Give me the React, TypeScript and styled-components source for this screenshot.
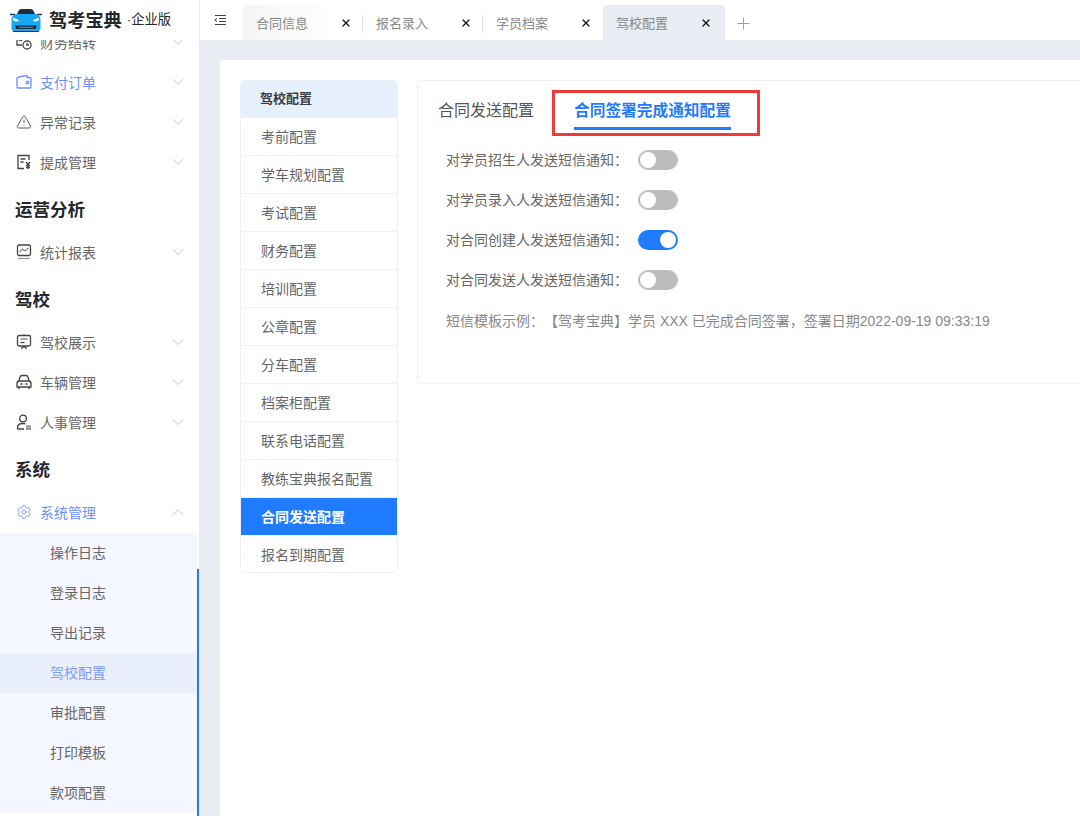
import React from 'react';
import styled, { createGlobalStyle } from 'styled-components';
import { ChevronDown, ChevronUp, Plus, Settings, TriangleAlert, X } from 'lucide-react';

const GlobalStyle = createGlobalStyle`
  html, body {
    margin: 0;
    padding: 0;
    height: 100%;
    overflow: hidden;
    background: #e9edf3;
    font-family: "Liberation Sans", "Noto Sans CJK SC", sans-serif;
  }
  * { box-sizing: border-box; }
`;

const Shell = styled.div`
  display: flex;
  width: 1080px;
  height: 816px;
  overflow: hidden;
`;

const Sidebar = styled.aside`
  position: relative;
  flex: 0 0 200px;
  height: 816px;
  background: #fff;
  border-right: 1px solid #e8ebf1;
  overflow: hidden;
`;

const LogoBar = styled.div`
  position: relative;
  z-index: 1;
  display: flex;
  align-items: center;
  height: 40px;
  padding-left: 10px;
  background: #fff;
`;

const LogoName = styled.span`
  margin: 0 0 3px 7px;
  font-size: 18.2px;
  font-weight: 700;
  color: #24272c;
  white-space: nowrap;
`;

const LogoEdition = styled.span`
  margin: 0 0 3px 5px;
  font-size: 13.3px;
  color: #24272c;
  white-space: nowrap;
`;

const MenuList = styled.div`
  margin-top: -17px;
`;

const MenuRow = styled.div<{ $active?: boolean }>`
  display: flex;
  align-items: center;
  height: 40px;
  padding: 0 11px 2px 16px;
  font-size: 14px;
  color: ${(p) => (p.$active ? '#6f8fff' : '#666')};
`;

const MenuIcon = styled.span`
  display: flex;
  align-items: center;
  justify-content: center;
  width: 16px;
  height: 16px;
  margin-right: 8px;
`;

const MenuLabel = styled.span`
  flex: 1;
`;

const GroupTitle = styled.div`
  height: 50px;
  padding: 0 15px;
  font-size: 17.5px;
  font-weight: 700;
  line-height: 55px;
  color: #24272c;
`;

const SubMenu = styled.div`
  width: 198px;
  background: #f4f7ff;
`;

const SubRow = styled.div<{ $active?: boolean }>`
  height: 40px;
  padding-left: 50px;
  font-size: 14px;
  line-height: 40px;
  color: ${(p) => (p.$active ? '#7f9bff' : '#666')};
  background: ${(p) => (p.$active ? '#e9f0fc' : 'transparent')};
`;

const ScrollMark = styled.div`
  position: absolute;
  top: 569px;
  bottom: 0;
  left: 197px;
  width: 2px;
  background: #1f7bff;
`;

const Main = styled.main`
  flex: 1;
  min-width: 0;
`;

const TabBar = styled.header`
  display: flex;
  align-items: flex-end;
  height: 40px;
  background: #fff;
`;

const Collapse = styled.span`
  display: flex;
  align-self: flex-start;
  width: 43px;
  padding: 15px 0 0 14px;
  color: #444;
`;

const Tab = styled.div<{ $active?: boolean; $first?: boolean; $divider?: boolean }>`
  position: relative;
  display: flex;
  align-items: center;
  justify-content: space-between;
  width: ${(p) => (p.$active ? '122px' : '120px')};
  height: 35px;
  padding: 0 ${(p) => (p.$active ? '13px' : '11px')} 0 13px;
  border-radius: 4px 4px 0 0;
  background: ${(p) =>
    p.$active ? '#e9edf3' : p.$first ? 'linear-gradient(90deg, #f5f5f5, #fff 80%)' : 'transparent'};
  font-size: 13px;
  color: #888;
  ${(p) =>
    p.$divider
      ? `&::after {
    content: '';
    position: absolute;
    top: 10px;
    right: 0;
    width: 1px;
    height: 18px;
    background: #dcdfe5;
  }`
      : ''}
`;

const AddTab = styled.span`
  display: flex;
  align-self: center;
  margin: 6px 0 0 9px;
  color: #9a9a9a;
`;

const Content = styled.div`
  height: 756px;
  margin: 20px 0 0 20px;
  padding: 20px 0 0 20px;
  background: #fff;
  border-radius: 4px 0 0 0;
  display: flex;
  align-items: flex-start;
  gap: 19px;
`;

const ConfigMenu = styled.nav`
  flex: 0 0 158px;
  border: 1px solid #edf0f6;
  border-radius: 4px;
  overflow: hidden;
`;

const ConfigHead = styled.div`
  height: 38px;
  margin: -1px -1px 0;
  padding-left: 20px;
  background: #e6f0fd;
  font-size: 13px;
  font-weight: 700;
  line-height: 38px;
  color: #3a3d42;
`;

const ConfigItem = styled.div<{ $active?: boolean }>`
  height: 38px;
  padding-left: 20px;
  border-bottom: 1px solid #f1f2f5;
  font-size: 14px;
  font-weight: ${(p) => (p.$active ? 700 : 400)};
  line-height: 38px;
  color: ${(p) => (p.$active ? '#fff' : '#666')};
  background: ${(p) => (p.$active ? '#1f7bff' : '#fff')};
  &:last-child {
    height: 36px;
    border-bottom: 0;
  }
`;

const Panel = styled.section`
  position: relative;
  flex: 1;
  height: 304px;
  border: 1px solid #eef0f5;
  border-right: 0;
  border-radius: 4px 0 0 4px;
`;

const PanelTabs = styled.div`
  display: flex;
  gap: 40px;
  height: 59px;
  padding: 12px 0 0 20px;
`;

const PanelTab = styled.div<{ $active?: boolean }>`
  height: 37px;
  font-size: ${(p) => (p.$active ? '15.7px' : '16px')};
  font-weight: ${(p) => (p.$active ? 700 : 400)};
  line-height: 36px;
  color: ${(p) => (p.$active ? '#1f7bff' : '#555')};
  border-bottom: ${(p) => (p.$active ? '3px solid #1f7bff' : '0')};
  white-space: nowrap;
`;

const Highlight = styled.div`
  position: absolute;
  top: 9px;
  left: 134px;
  width: 208px;
  height: 46px;
  border: 3px solid #f03a3a;
`;

const SwitchRow = styled.div`
  display: flex;
  align-items: center;
  height: 40px;
  padding-left: 28px;
  font-size: 14px;
  color: #666;
`;

const SwitchLabel = styled.span`
  width: 192px;
  padding-bottom: 2px;
  white-space: nowrap;
`;

const Toggle = styled.span<{ $on?: boolean }>`
  display: flex;
  justify-content: ${(p) => (p.$on ? 'flex-end' : 'flex-start')};
  width: 40px;
  height: 20px;
  padding: 2px;
  border-radius: 10px;
  background: ${(p) => (p.$on ? '#1f7bff' : '#bdbdbd')};
  &::before {
    content: '';
    width: 16px;
    height: 16px;
    border-radius: 50%;
    background: #fff;
  }
`;

const Sample = styled.p`
  margin: 0;
  padding: 1px 0 0 28px;
  height: 40px;
  font-size: 14px;
  line-height: 40px;
  color: #888;
  white-space: nowrap;
  text-spacing-trim: space-all;
`;

const CarLogo = () => (
  <svg width="32" height="23" viewBox="0 0 32 23">
    <path d="M0 5.500h5M27 5.500h5" stroke="#333" strokeWidth="1.400" />
    <path d="M7 5 L9 1 Q10 0 12 0 H20 Q22 0 23 1 L25 5 Z" fill="#1d2c3f" />
    <path d="M1.500 10 Q2 6 6 5 H26 Q30 6 30.500 10 V20 Q30.500 22 28 22 H4 Q1.500 22 1.500 20 Z" fill="#16a6f2" />
    <path d="M3 8.500 L9 11 L8 12.500 Q4 12.500 3 11 Z M29 8.500 L23 11 L24 12.500 Q28 12.500 29 11 Z" fill="#dff5ff" />
    <path d="M5 16.500 H27 L25.500 20 H6.500 Z" fill="#1d2c3f" />
    <path d="M9 18.300 H23" stroke="#16a6f2" strokeWidth="1.100" />
    <path d="M3 22 H29 V23 H3 Z" fill="#1d2c3f" />
  </svg>
);

const Stroke = ({ children, color = '#444' }: { children: React.ReactNode; color?: string }) => (
  <svg width="16" height="16" viewBox="0 0 16 16" fill="none" stroke={color} strokeWidth="1.300">
    {children}
  </svg>
);

const FinanceIcon = () => (
  <Stroke>
    <path d="M1 1v10h5M10 1h4v3" />
    <path d="M3 4l3 3M6 4l-3 3" />
    <circle cx="11" cy="11" r="4" />
    <path d="M11 9v2h2" />
  </Stroke>
);

const WalletIcon = () => (
  <Stroke color="#6f8fff">
    <path d="M1 5 Q1 3 3 3 L11 1.500 V3.500 H14 Q15 3.500 15 4.500 V13 Q15 14 14 14 H2 Q1 14 1 13 Z" />
    <circle cx="11.500" cy="8.500" r="1.400" />
  </Stroke>
);

const ReceiptIcon = () => (
  <Stroke>
    <path d="M13 6V1.500H2v13h6" />
    <path d="M4.500 5h5M4.500 8h3" />
    <path d="M10 8l2 2.500L14 8M12 10.500V15M10 11.500h4M10 13.500h4" />
  </Stroke>
);

const ChartIcon = () => (
  <Stroke>
    <rect x="1.500" y="1" width="13" height="10.500" rx="1.500" />
    <path d="M3.500 8l3-3 2.500 2 3.500-3" stroke="#888" />
    <path d="M2 14.500h12" stroke="#999" />
  </Stroke>
);

const ShowIcon = () => (
  <Stroke>
    <rect x="1.500" y="1.500" width="13" height="10.500" rx="1.500" />
    <path d="M4.500 5h7" stroke="#888" strokeWidth="1.500" />
    <path d="M4.500 8.500h4" />
    <path d="M8 .5v1.500M8 12v2M5.500 15l1.500-3M10.500 15L9 12" />
  </Stroke>
);

const CarIcon = () => (
  <Stroke>
    <path d="M2.800 7l1.300-4Q4.400 1.500 6 1.500h4q1.600 0 1.900 1.500L13.200 7" />
    <path d="M1 9.500q0-2.500 2.500-2.500h9q2.500 0 2.500 2.500v3.500H1z" />
    <path d="M3 13V15M13 13V15M4.500 10h2M9.500 10h2" />
  </Stroke>
);

const UserIcon = () => (
  <Stroke>
    <circle cx="7" cy="4.500" r="3.400" />
    <path d="M1.500 15v-1.500q0-4 5.500-4q1.500 0 2.500.5M1.500 15H8" />
    <path d="M10 12.500h5M10 14.800h5" stroke="#888" strokeWidth="1.800" />
  </Stroke>
);

const topItems = [
  { label: '财务结转', icon: <FinanceIcon /> },
  { label: '支付订单', icon: <WalletIcon />, active: true },
  { label: '异常记录', icon: <TriangleAlert size={18} strokeWidth={1.200} color="#333" /> },
  { label: '提成管理', icon: <ReceiptIcon /> },
];

const schoolItems = [
  { label: '驾校展示', icon: <ShowIcon /> },
  { label: '车辆管理', icon: <CarIcon /> },
  { label: '人事管理', icon: <UserIcon /> },
];

const subItems = ['操作日志', '登录日志', '导出记录', '驾校配置', '审批配置', '打印模板', '款项配置'];
const tabs = ['合同信息', '报名录入', '学员档案'];
const configItems = ['考前配置', '学车规划配置', '考试配置', '财务配置', '培训配置', '公章配置', '分车配置', '档案柜配置', '联系电话配置', '教练宝典报名配置', '合同发送配置', '报名到期配置'];
const switches = [
  { label: '对学员招生人发送短信通知：', on: false },
  { label: '对学员录入人发送短信通知：', on: false },
  { label: '对合同创建人发送短信通知：', on: true },
  { label: '对合同发送人发送短信通知：', on: false },
];

const Arrow = () => <ChevronDown size={20} strokeWidth={1} color="#b4b9c6" />;

type Item = { label: string; icon: React.ReactNode; active?: boolean };

const Row = ({ item }: { item: Item }) => (
  <MenuRow $active={item.active}>
    <MenuIcon>{item.icon}</MenuIcon>
    <MenuLabel>{item.label}</MenuLabel>
    <Arrow />
  </MenuRow>
);

export default function App() {
  return (
    <>
      <GlobalStyle />
      <Shell>
        <Sidebar>
          <LogoBar>
            <CarLogo />
            <LogoName>驾考宝典</LogoName>
            <LogoEdition>·企业版</LogoEdition>
          </LogoBar>
          <MenuList>
            {topItems.map((item) => (
              <Row key={item.label} item={item} />
            ))}
            <GroupTitle>运营分析</GroupTitle>
            <Row item={{ label: '统计报表', icon: <ChartIcon /> }} />
            <GroupTitle>驾校</GroupTitle>
            {schoolItems.map((item) => (
              <Row key={item.label} item={item} />
            ))}
            <GroupTitle>系统</GroupTitle>
            <MenuRow $active>
              <MenuIcon>
                <Settings size={18} strokeWidth={1.200} color="#6f8fff" />
              </MenuIcon>
              <MenuLabel>系统管理</MenuLabel>
              <ChevronUp size={20} strokeWidth={1} color="#b4b9c6" />
            </MenuRow>
            <SubMenu>
              {subItems.map((label) => (
                <SubRow key={label} $active={label === '驾校配置'}>
                  {label}
                </SubRow>
              ))}
            </SubMenu>
          </MenuList>
          <ScrollMark />
        </Sidebar>
        <Main>
          <TabBar>
            <Collapse>
              <svg width="12" height="10" viewBox="0 0 12 10" fill="none" stroke="#444" strokeWidth="1">
                <path d="M1 .5h11M5 3.500h7M5 6.500h7M1 9.500h11M3 3.500L.8 5 3 6.500" />
              </svg>
            </Collapse>
            {tabs.map((label, i) => (
              <Tab key={label} $first={i === 0} $divider={i < 2}>
                {label}
                <X size={12} strokeWidth={2.500} color="#111" />
              </Tab>
            ))}
            <Tab $active>
              驾校配置
              <X size={12} strokeWidth={2.500} color="#111" />
            </Tab>
            <AddTab>
              <Plus size={19} strokeWidth={1.200} />
            </AddTab>
          </TabBar>
          <Content>
            <ConfigMenu>
              <ConfigHead>驾校配置</ConfigHead>
              {configItems.map((label) => (
                <ConfigItem key={label} $active={label === '合同发送配置'}>
                  {label}
                </ConfigItem>
              ))}
            </ConfigMenu>
            <Panel>
              <PanelTabs>
                <PanelTab>合同发送配置</PanelTab>
                <PanelTab $active>合同签署完成通知配置</PanelTab>
              </PanelTabs>
              <Highlight />
              {switches.map((s) => (
                <SwitchRow key={s.label}>
                  <SwitchLabel>{s.label}</SwitchLabel>
                  <Toggle $on={s.on} />
                </SwitchRow>
              ))}
              <Sample>短信模板示例：【驾考宝典】学员 XXX 已完成合同签署，签署日期2022-09-19 09:33:19</Sample>
            </Panel>
          </Content>
        </Main>
      </Shell>
    </>
  );
}
